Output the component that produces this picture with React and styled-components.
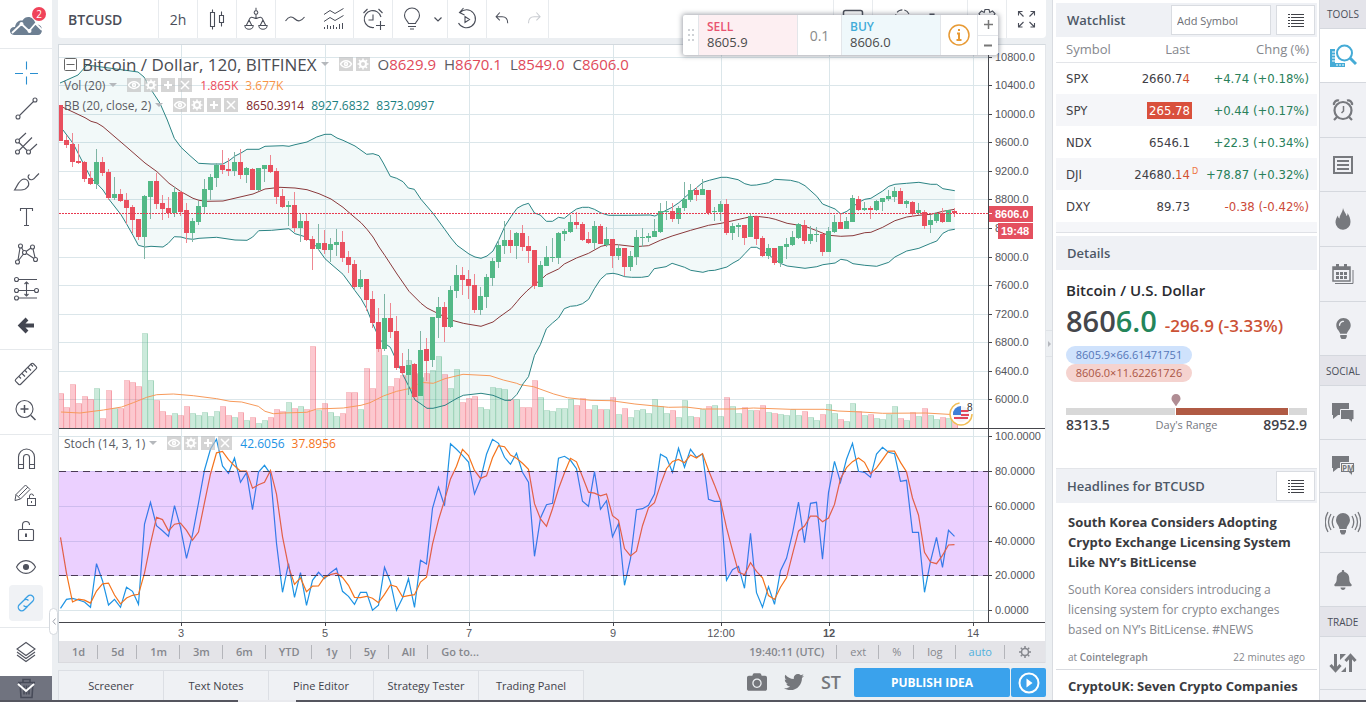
import React from "react";
import styled, { createGlobalStyle } from "styled-components";
import { FaLightbulb, FaBell, FaCamera, FaTwitter, FaMapMarker } from "react-icons/fa";

const UI = '"Open Sans", "Noto Sans", sans-serif';
const NUM = '"DejaVu Sans Condensed", "DejaVu Sans", sans-serif';
const AXIS = '"Liberation Sans", Arial, sans-serif';

const GlobalStyle = createGlobalStyle`
  *, *::before, *::after { box-sizing: border-box; }
  body { margin: 0; background: #eceff2; font-family: ${UI}; font-size: 12px; color: #4a4e59; }
  button, input { font: inherit; color: inherit; margin: 0; padding: 0; border: 0; background: none; }
  button { cursor: pointer; }
  h1, h2, h3, p { margin: 0; }
  svg { display: block; flex: none; }
`;

/* ---------- market data ---------- */

// Each bar: high, body top, body bottom, low, volume top; positive trend marked by 1.
// Values are measured downwards on a scale of three units per chart pixel.
const EARLY = [
  [45,45,153,153,910,0],[135,150,165,173,952,0],[129,162,216,231,883,0],[162,213,218,222,940,0],[212,216,266,276,919,0],
  [243,264,282,284,928,0],[177,216,281,296,895,1],[201,216,248,258,985,0],[237,246,324,330,901,0],[261,312,324,330,955,1],
  [297,312,332,335,955,0],[309,330,354,402,871,0],[345,351,389,429,877,0],[387,387,441,450,889,0],[314,318,440,507,730,1],
  [273,273,321,387,871,1],[249,273,342,357,931,0],[315,339,357,390,964,0],[321,354,369,384,976,0],[291,306,369,381,970,1],
  [303,306,366,378,976,0],[339,360,429,459,949,0],[384,393,429,456,970,1],[333,348,396,404,976,1],[267,297,351,372,967,1],
  [252,261,300,330,979,1],[218,224,263,290,964,1],[180,225,240,252,949,0],[204,237,243,258,976,0],[186,216,243,258,982,1],
  [177,216,255,266,967,0],[231,234,255,279,991,1],[234,237,300,300,982,0],[234,234,300,302,1000,1],[225,225,237,276,991,1],
  [195,225,245,249,982,0],[234,243,320,342,958,0],[297,318,351,354,964,0],[333,345,350,408,937,1],[306,345,414,426,955,0],
  [371,393,414,456,949,1],[372,393,450,453,958,0],[438,447,477,540,769,0],[402,459,477,480,961,1],[420,459,480,492,940,0],
  [444,462,480,516,967,1],[417,456,464,498,979,1],[423,456,503,516,970,0],[483,500,524,549,907,0],[510,522,591,597,907,0],
  [540,567,590,597,958,1],[567,567,630,663,835,0],[603,627,698,714,895,0],[654,696,777,786,775,0],[612,684,776,783,796,1],
  [639,684,726,744,889,0],[678,723,834,840,865,0],[789,828,849,855,856,0],[777,825,854,915,811,1],[819,822,920,924,850,0],
  [723,780,918,918,860,1],[744,777,813,874,850,0],[681,681,810,830,841,1],[621,651,684,744,799,1],[636,651,711,756,853,0],
  [588,600,711,714,895,1],[525,555,603,624,838,1],[531,555,570,615,937,0],[540,567,588,627,925,0],[552,585,660,669,919,0],
  [591,618,660,675,952,1],[552,561,620,654,958,1],[504,513,564,588,892,1],[450,465,516,534,895,1],[393,450,468,492,898,1],
  [420,450,468,489,928,0],[426,429,468,507,928,1],
];
const LATE = [
  [225,250,291,303,772,0],[258,288,303,338,772,0],[300,300,408,417,691,0],[333,345,411,411,742,1],[288,321,348,348,781,1],
  [264,320,324,336,784,1],[246,249,324,342,775,1],[237,243,251,273,775,1],[195,216,246,249,748,1],[186,216,224,237,766,0],
  [216,222,270,273,745,0],[246,267,279,281,778,0],[213,228,279,297,766,1],[222,228,282,282,778,0],[231,267,284,291,778,1],
  [267,267,318,354,742,0],[282,294,318,330,793,1],[294,294,351,378,775,0],[303,318,350,363,802,1],[240,261,321,345,781,1],
  [234,260,264,291,778,1],[249,258,264,276,790,1],[207,243,261,261,748,1],[159,183,246,249,769,1],[153,183,186,210,790,1],
  [159,183,207,216,781,0],[168,174,207,222,802,1],[96,147,174,183,751,1],[102,120,150,156,799,1],[111,120,135,153,802,0],
  [87,117,135,135,778,1],[120,120,189,195,769,0],[171,183,187,213,766,1],[153,162,186,213,799,1],[147,162,249,255,742,0],
  [219,228,249,270,769,1],[219,226,231,261,790,1],[225,225,264,285,772,0],[189,198,261,261,781,1],[198,198,267,285,781,0],
  [258,264,318,321,766,0],[282,294,318,327,787,1],[294,294,339,346,790,0],[288,288,339,350,793,1],[264,282,290,327,796,1],
  [243,261,285,288,778,1],[219,222,264,267,796,1],[210,225,273,282,784,0],[228,252,273,282,802,1],[231,252,255,276,811,1],
  [246,252,306,318,793,0],[231,243,305,305,763,1],[195,216,246,249,790,1],[189,216,237,237,808,0],[201,213,237,237,814,1],
  [135,144,216,216,760,1],[138,147,180,183,784,0],[156,174,180,183,796,1],[168,174,180,207,793,0],[150,153,180,183,805,1],
  [144,144,156,183,808,1],[120,138,147,153,793,1],[111,123,141,156,769,1],[114,123,162,162,805,0],[150,153,161,174,811,1],
  [153,156,192,201,787,0],[159,180,190,195,799,1],[180,186,228,237,775,0],[195,210,225,250,796,1],[186,189,213,219,808,1],
  [174,189,216,219,802,0],[180,180,216,216,805,1],[174,183,190,201,817,0],
];
const LATE_SHIFT = 180;
const toY = (v) => v / 3 + 45;
const barX = (i) => 1.5 + 6 * i;

const BARS = [
  ...EARLY,
  ...LATE.map((b) => b.map((v, k) => (k < 5 ? v + LATE_SHIFT : v))),
].map(([high, top, bottom, low, vol, up], i) => ({
  x: barX(i), high: toY(high), top: toY(top), bottom: toY(bottom), low: toY(low), vol: toY(vol), up: up === 1,
}));

const curve = (early, late) => [
  ...early.map(([x, y]) => [x / 3 - 9, toY(y)]),
  ...late.map(([x, y]) => [x / 2.958 + 461, toY(y + LATE_SHIFT)]),
];
const points = (list) => list.map(([x, y]) => `${x.toFixed(1)},${y.toFixed(1)}`).join(" ");

const UPPER = curve(
  [[30,-21],[57,-33],[84,-45],[111,-75],[177,-66],[264,-54],[282,-39],[304,0],[330,40],[352,90],[373,145],[393,172],[420,197],[446,220],[483,222],[519,222],[540,210],[555,198],[573,189],[591,178],[627,178],[645,169],[699,167],[717,169],[735,164],[771,156],[800,141],[825,133],[843,133],[861,144],[879,151],[915,168],[950,193],[969,191],[987,197],[1000,219],[1021,259],[1040,265],[1059,275],[1075,294],[1093,298],[1113,328],[1149,370],[1185,419],[1203,444],[1221,466],[1257,492],[1275,501],[1293,505],[1311,498],[1329,483],[1347,448],[1365,408],[1383,380],[1401,355],[1419,345]],
  [[12,164],[25,160],[43,189],[60,195],[78,214],[96,214],[114,202],[131,205],[149,190],[167,177],[185,172],[203,172],[220,178],[240,189],[262,196],[320,196],[385,195],[399,198],[415,190],[450,172],[470,158],[500,131],[522,113],[541,97],[560,91],[595,82],[612,82],[645,89],[665,101],[683,106],[700,105],[735,98],[753,88],[800,91],[824,97],[843,107],[878,139],[895,162],[932,177],[949,192],[967,184],[1002,157],[1020,148],[1038,145],[1073,123],[1091,109],[1109,103],[1144,100],[1180,97],[1215,103],[1233,103],[1251,116],[1286,122]]
);
const MIDDLE = curve(
  [[30,48],[69,66],[105,83],[123,94],[141,99],[159,110],[195,141],[231,172],[285,219],[321,245],[357,280],[393,305],[429,325],[447,331],[470,334],[519,333],[570,321],[609,312],[645,297],[690,292],[735,294],[771,299],[807,311],[843,327],[879,352],[915,383],[933,398],[951,418],[969,441],[987,471],[1005,497],[1041,552],[1077,604],[1113,640],[1131,654],[1149,663],[1185,681],[1203,690],[1240,700],[1257,703],[1293,709],[1329,696],[1347,682],[1383,656],[1401,635]],
  [[0,444],[20,423],[43,403],[60,391],[78,374],[114,357],[131,342],[167,324],[203,310],[240,289],[262,284],[290,284],[340,290],[380,287],[415,271],[450,258],[505,241],[558,226],[595,220],[630,212],[665,204],[683,200],[700,199],[735,203],[755,208],[790,220],[843,229],[878,242],[896,250],[914,256],[949,259],[985,257],[1020,248],[1038,247],[1073,232],[1109,212],[1144,201],[1180,196],[1215,193],[1251,184],[1286,178]]
);
const LOWER = curve(
  [[30,112],[39,120],[69,160],[105,230],[123,264],[141,281],[159,300],[177,328],[213,374],[231,404],[249,436],[265,466],[285,471],[303,469],[339,471],[355,460],[373,440],[393,441],[411,446],[429,448],[447,445],[500,442],[555,450],[591,451],[608,441],[626,422],[665,421],[717,416],[735,431],[771,442],[800,471],[825,506],[843,522],[879,553],[915,602],[933,626],[950,656],[968,701],[990,750],[1021,772],[1041,815],[1059,855],[1077,890],[1095,930],[1113,942],[1131,955],[1149,955],[1185,946],[1221,925],[1240,916],[1257,914],[1293,910],[1329,916],[1365,931],[1383,931],[1401,913]],
  [[10,700],[25,680],[43,616],[60,584],[78,536],[96,519],[114,504],[131,476],[149,469],[167,467],[185,461],[203,448],[220,416],[238,388],[256,372],[275,370],[290,373],[310,380],[330,382],[360,382],[380,379],[397,356],[432,350],[450,340],[487,352],[505,361],[541,367],[558,362],[576,361],[612,351],[630,339],[648,329],[665,311],[683,292],[700,292],[715,300],[740,318],[770,340],[790,348],[843,355],[878,350],[896,344],[932,339],[949,328],[967,331],[985,341],[1020,346],[1055,349],[1091,337],[1109,321],[1144,303],[1180,295],[1215,280],[1233,273],[1251,250],[1268,241],[1286,238]]
);
const VOLUME_AVERAGE = curve(
  [[33,966],[90,969],[160,960],[215,951],[250,938],[290,922],[320,914],[370,912],[430,917],[500,926],[540,934],[575,936],[625,949],[645,964],[670,971],[700,969],[770,967],[800,957],[880,954],[933,946],[960,938],[1000,918],[1040,904],[1090,893],[1110,877],[1150,880],[1185,866],[1239,853],[1320,857],[1360,870],[1400,880]],
  [[0,704],[40,710],[100,732],[140,743],[210,751],[270,752],[340,762],[440,772],[490,771],[540,777],[640,777],[690,774],[800,778],[900,778],[940,783],[1010,786],[1073,790],[1200,789],[1286,794]]
);

const STOCH_K = [535,508,505,510,516,532,401,452,525,508,532,472,484,523,282,217,287,302,319,227,292,385,314,219,120,57,28,108,130,84,157,128,239,126,106,132,340,487,401,502,428,526,451,427,446,428,415,484,499,523,487,487,541,526,412,457,541,504,446,532,391,402,235,172,227,41,58,76,96,192,148,73,28,40,82,103,70,127,157,379,264,224,220,85,79,91,116,214,229,125,238,212,320,281,466,386,239,236,226,192,73,83,127,55,112,58,82,72,208,214,214,451,419,409,475,310,488,532,470,523,422,385,310,216,338,220,217,388,188,94,157,88,40,124,127,142,72,52,67,71,154,151,307,307,487,394,322,412,301,319];
const STOCH_D = STOCH_K.map((v, i) => (i < 2 ? [322, 430][i] : (v + STOCH_K[i - 1] + STOCH_K[i - 2]) / 3));
const stochLine = (list) => points(list.map((v, i) => [barX(i), v / 3 + 1]));

const TIME_MARKS = [[122, "3"], [266, "5"], [410, "7"], [554, "9"], [662, "12:00"], [770, "12", true], [914, "14"]];
const PRICE_MARKS = Array.from({ length: 13 }, (_, i) => [Math.round(11.5 + 28.58 * i), `${10800 - 400 * i}.0`]);
const STOCH_MARKS = [[7, "100.0000"], [42, "80.0000"], [77, "60.0000"], [112, "40.0000"], [146, "20.0000"], [181, "0.0000"]];

/* ---------- page frame ---------- */

const Page = styled.div`
  height: 100vh; min-height: 600px; display: flex; flex-direction: column; overflow: hidden;
`;
const Workspace = styled.div`flex: 1; min-height: 0; display: flex;`;
const StatusStrip = styled.footer`height: 2px; background: #55565f; padding-left: 238px; flex: none;`;
const StatusMark = styled.div`width: 58px; height: 2px; background: #e9eaee;`;

/* ---------- drawing toolbar ---------- */

const DrawBar = styled.nav`
  position: relative; width: 52px; flex: none; background: #fff; display: flex; flex-direction: column;
`;
const Logo = styled.a`
  height: 49px; flex: none; display: flex; align-items: center; justify-content: center;
  position: relative; border-bottom: 1px solid #e6e9ec;
`;
const Badge = styled.span`
  position: absolute; top: 7px; right: 6px; width: 14px; height: 14px; border-radius: 50%;
  background: #f0435a; color: #fff; font-size: 10px; line-height: 14px; text-align: center;
`;
const DrawGroup = styled.div`
  padding: 6px 0; display: flex; flex-direction: column; align-items: center;
  & + & { border-top: 1px solid #e6e9ec; }
`;
const DrawButton = styled.button`
  width: 34px; height: 36px; border-radius: 4px; display: flex; align-items: center; justify-content: center; flex: none;
  color: ${(p) => (p.$active ? "#3aa0e4" : "#50535e")};
  background: ${(p) => (p.$active ? "#f0f2f5" : "transparent")};
`;
const ScrollDown = styled.button`
  position: absolute; left: 0; right: 0; bottom: 0; height: 24px; background: rgba(80, 84, 99, 0.82);
  display: flex; align-items: center; justify-content: center; color: #fff;
`;
const CollapseHandle = styled.button`
  position: absolute; right: -6px; top: 608px; width: 9px; height: 27px; border-radius: 5px;
  background: #fff; border: 1px solid #d5d9de; color: #9a9ea8; z-index: 2;
  display: flex; align-items: center; justify-content: center;
`;

const Line = ({ children, size = 28, w = 1.1, ...rest }) => (
  <svg width={size} height={size} viewBox="0 0 28 28" fill="none" stroke="currentColor" strokeWidth={w} aria-hidden="true" {...rest}>
    {children}
  </svg>
);

const DRAW_ICONS = {
  cross: <Line style={{ color: "#2a8fd0" }}><path d="M14.5 2.5v8M14.5 17.500v8M3 14.500h8M18 14.500h8" /></Line>,
  trend: <Line><circle cx="6" cy="22" r="2" /><circle cx="23" cy="5" r="2" /><path d="M7.500 20.500l14-14" /></Line>,
  fork: <Line><circle cx="5.500" cy="10" r="2" /><circle cx="5.500" cy="21" r="2" /><circle cx="16.500" cy="21" r="2" /><path d="M7 8.500L14 2M7 19.500L20 6.500M18 19.500L25 13M7 11.500L15 19.500" /></Line>,
  brush: <Line><path d="M2.500 23C6 18 7 12.500 12 12A4.800 4.800 0 0 1 15 20.500C13.500 22.500 11 23 9 23ZM17.500 7.500C14.500 9.500 17 13.500 20.500 12.500C22.500 12 23 10.500 24 9.500L27 6.500" /></Line>,
  text: <Line><path d="M8.500 8V5.500h12V8M14.500 5.500v17M12 22.500h5" /></Line>,
  pattern: <Line><circle cx="8.500" cy="7" r="2" /><circle cx="20.500" cy="8" r="2" /><circle cx="12.500" cy="13.500" r="2" /><circle cx="5.500" cy="23" r="2" /><circle cx="23.500" cy="20.500" r="2" /><path d="M8 9L6 21M9.500 8.500L11.500 12M14 12.500L19 9M21 10L23 18.500M14.500 14.500L22 19.500M11.500 15L6.500 21.500" /></Line>,
  range: <Line><circle cx="4.500" cy="4.500" r="2" /><circle cx="4.500" cy="15.500" r="2" /><circle cx="24.500" cy="15.500" r="2" /><circle cx="4.500" cy="23" r="2" /><path d="M6.500 4.500h18.500M6.500 15.500h16M6.500 23h18.500M14.500 7v14M12.500 9l2-2 2 2M12.500 19l2 2 2-2" /></Line>,
  back: <Line w={4} style={{ color: "#434651" }}><path d="M22 14.500H9M15 8l-6.500 6.500L15 21" /></Line>,
  ruler: <Line><rect x="1.500" y="10.500" width="25" height="7" rx="1.500" transform="rotate(-45 14 14)" /><path d="M7 16.500l2 2M10 13.500l3 3M13 10.500l2 2M16 7.500l3 3M19 4.500l2 2" /></Line>,
  zoom: <Line><circle cx="12.500" cy="13" r="8.500" /><path d="M8.500 13h8M12.500 9v8M19 19.500l4.500 4.500" strokeWidth="1.500" /></Line>,
  magnet: <Line><path d="M6.500 23.500V12a8 8 0 0 1 16 0v11.500h-5V12.500a3 3 0 0 0-6 0v11ZM6.500 19.500h5M17.500 19.500h5" /></Line>,
  lockdraw: <Line w={1}><path d="M3 19.500l1-6L13.500 4l4.500 4.500L8.500 18ZM6.500 15.500L16 6M4 13.500l4.500 4.500" /><rect x="15.500" y="17.500" width="8" height="7" /><path d="M17.500 17.500V15a2 2 0 0 1 4 0M19.500 20v2" /></Line>,
  unlock: <Line><rect x="6.500" y="12.500" width="15" height="11" rx="1" /><path d="M10.500 12.500V8a3.500 3.500 0 0 1 7 0" /><path d="M14 16.500v3.500" strokeWidth="2" /></Line>,
  eye: <Line><path d="M4.500 14C9 5.500 19 5.500 23.500 14C19 22.500 9 22.500 4.500 14Z" /><circle cx="14" cy="14" r="2.500" fill="currentColor" /></Line>,
  link: <Line w={1.3}><g transform="rotate(-45 14 14)"><path d="M13 17.500H8a3.500 3.500 0 0 1 0-7h6.500a3.500 3.500 0 0 1 3 3.500M15 10.500h5a3.500 3.500 0 0 1 0 7h-6.500a3.500 3.500 0 0 1-3-3.500" /></g></Line>,
  layers: <Line><path d="M14 4.500L23 11l-9 6.500L5 11ZM5 14l9 6.500L23 14M5 17l9 6.500L23 17" /></Line>,
  trash: <Line w={1.6} style={{ color: "#1f222c" }}><path d="M6 8.500h17M11 8V5.500h7V8M8 8.500l1 15h11l1-15M12 11.500v9M14.500 11.500v9M17 11.500v9" /></Line>,
};

const DRAW_GROUPS = [
  [["cross", "Crosshair"], ["trend", "Trend line"], ["fork", "Pitchfork"], ["brush", "Brush"], ["text", "Text"], ["pattern", "Pattern"], ["range", "Forecast"], ["back", "Arrow"]],
  [["ruler", "Measure"], ["zoom", "Zoom in"]],
  [["magnet", "Magnet"], ["lockdraw", "Stay in drawing mode"], ["unlock", "Lock drawings"], ["eye", "Hide drawings"], ["link", "Link", true]],
  [["layers", "Object tree"], ["trash", "Remove"]],
];

function DrawingToolbar() {
  return (
    <DrawBar>
      <Logo href="#" aria-label="Home">
        <svg width="34" height="24" viewBox="0 0 34 24">
          <path d="M5 23C-1 22 0 14.500 6 15C7 9 11 8 13.500 8.500C17 3 25 4 27 13C31 12 33 15 33 18C33 21 31 23 29 23Z" fill="#6d7f92" />
          <path d="M3 21L12.500 12L20 19L26.500 11.500L33 18" fill="none" stroke="#fff" strokeWidth="1.800" />
          <circle cx="12.500" cy="12" r="2" fill="#fff" /><circle cx="20.500" cy="19" r="2" fill="#fff" />
        </svg>
        <Badge>2</Badge>
      </Logo>
      {DRAW_GROUPS.map((group, g) => (
        <DrawGroup key={g}>
          {group.map(([icon, label, active]) => (
            <DrawButton key={icon} aria-label={label} $active={active}>{DRAW_ICONS[icon]}</DrawButton>
          ))}
        </DrawGroup>
      ))}
      <ScrollDown aria-label="Scroll down">
        <svg width="18" height="10" viewBox="0 0 18 10" fill="none" stroke="currentColor" strokeWidth="2"><path d="M1 1l8 7 8-7" /></svg>
      </ScrollDown>
      <CollapseHandle aria-label="Hide toolbar">
        <svg width="4" height="7" viewBox="0 0 4 7" fill="none" stroke="currentColor"><path d="M3.500 .5L1 3.500l2.500 3" /></svg>
      </CollapseHandle>
    </DrawBar>
  );
}

/* ---------- centre column ---------- */

const Centre = styled.main`
  position: relative; flex: 1; min-width: 0; display: flex; flex-direction: column; padding: 0 6px;
`;
const TopBar = styled.header`
  height: 38px; flex: none; background: #fff; border-radius: 0 0 4px 4px; display: flex; overflow: hidden;
`;
const TopCell = styled.button`
  width: ${(p) => p.$w}px; flex: none; display: flex; align-items: center; justify-content: center; gap: 8px;
  border-right: 1px solid ${(p) => (p.$open ? "transparent" : "#e8ebee")}; color: #4a4e59; font-size: 14px;
`;
const SymbolCell = styled(TopCell)`font-weight: 600; justify-content: flex-start; padding-left: 10px;`;
const Spacer = styled.div`flex: 1; ${(p) => p.$edge && "border-right: 1px solid #e8ebee;"}`;

const TicketBox = styled.section`
  position: absolute; top: 15px; right: 54px; z-index: 3; height: 40px; display: flex; background: #fff;
  border-radius: 2px; box-shadow: 0 0 5px 1px rgba(70, 76, 90, 0.5);
`;
const TicketDrag = styled.div`width: 15px; display: flex; align-items: center; justify-content: center;`;
const TicketSide = styled.button`
  width: 100px; padding: 4px 0 0 8px; text-align: left; display: flex; flex-direction: column; color: #4a4a4a;
  font-size: 13px; line-height: 16px; background: ${(p) => (p.$buy ? "#eff8fb" : "#fdeff2")};
  border: 0 solid #e3e6ea; border-width: 0 1px;
`;
const TicketLabel = styled.span`
  font-size: 12px; line-height: 15px; font-weight: 600; color: ${(p) => (p.$buy ? "#41abd8" : "#e85370")};
`;
const TicketQty = styled.div`
  width: 43px; display: flex; align-items: center; justify-content: center; color: #8a8a8a; font-size: 14px;
`;
const TicketInfo = styled.button`width: 36px; display: flex; align-items: center; justify-content: center;`;
const TicketSteps = styled.div`width: 21px; display: flex; flex-direction: column; border-left: 1px solid #e3e6ea;`;
const StepButton = styled.button`
  flex: 1; display: flex; align-items: center; justify-content: center; color: #777;
  & + & { border-top: 1px solid #e3e6ea; }
`;

function OrderTicket() {
  return (
    <TicketBox>
      <TicketDrag>
        <svg width="6" height="12" viewBox="0 0 6 12" fill="#cfd2d6">
          {[0, 5, 10].map((y) => <g key={y}><rect y={y} width="2" height="2" /><rect x="4" y={y} width="2" height="2" /></g>)}
        </svg>
      </TicketDrag>
      <TicketSide><TicketLabel>SELL</TicketLabel>8605.9</TicketSide>
      <TicketQty>0.1</TicketQty>
      <TicketSide $buy><TicketLabel $buy>BUY</TicketLabel>8606.0</TicketSide>
      <TicketInfo aria-label="Order info">
        <svg width="24" height="24" viewBox="0 0 24 24" fill="none" stroke="#e79a35" strokeWidth="1.500">
          <circle cx="12" cy="12" r="10" /><path d="M10 10.500h2V17M9.500 17h5M12 6v2" strokeWidth="2" />
        </svg>
      </TicketInfo>
      <TicketSteps>
        <StepButton aria-label="Increase"><svg width="9" height="9" stroke="currentColor" strokeWidth="1.500"><path d="M0 4.500h9M4.500 0v9" /></svg></StepButton>
        <StepButton aria-label="Decrease"><svg width="9" height="9" stroke="currentColor" strokeWidth="2"><path d="M0 4.500h8" /></svg></StepButton>
      </TicketSteps>
    </TicketBox>
  );
}

function TopToolbar() {
  return (
    <TopBar>
      <SymbolCell $w={101}>BTCUSD</SymbolCell>
      <TopCell $w={39}>2h</TopCell>
      <TopCell $w={39} aria-label="Chart type"><Line><path d="M7.500 7.500h4v14h-4ZM9.500 4.500v3M9.500 21.500v3M16.500 10.500h4v7h-4ZM18.500 6.500v4M18.500 17.500v4" /></Line></TopCell>
      <TopCell $w={39} aria-label="Compare"><Line size={26}><circle cx="14" cy="7" r="2" /><path d="M14 5V2M14 9v4.500M6.500 15C8 10 11.500 13 14 13.500C16.500 13 20 10 21.500 15M3.500 21L6.500 15L9.500 21M18.500 21L21.500 15L24.500 21M2 21h9a4.500 4 0 0 1-9 0ZM17 21h9a4.500 4 0 0 1-9 0Z" /></Line></TopCell>
      <TopCell $w={39} aria-label="Line style" $open><Line><path d="M4.500 16C8 11 11 11 14 14S20 16.500 23.500 12" /></Line></TopCell>
      <TopCell $w={39} aria-label="Indicators"><Line w={1}><path d="M4 9.500l6-4 5 3 8.500-5M4 16.500l6-4 5 3 8.500-5M4.500 24v-2M7.500 24v-4M10.500 24v-3M13.500 24v-4M16.500 24v-2M19.500 24v-5M22.500 24v-6" /></Line></TopCell>
      <TopCell $w={39} aria-label="Alert"><Line><path d="M22 12A8.500 8.500 0 1 0 15 22.500M14 9.500V15H9.500M17 20.500h9M21.500 16v9M4.500 8l4-4M19.500 4l4 4" /></Line></TopCell>
      <TopCell $w={55} aria-label="Ideas">
        <Line><path d="M10.500 18.500C10 15.500 6.500 15 6.500 10.500a7.500 7.500 0 0 1 15 0C21.500 15 18 15.500 17.500 18.500ZM10 21.500h8M12 24h4" /></Line>
        <svg width="8" height="5" fill="none" stroke="currentColor" strokeWidth="1.200"><path d="M.5.5L4 4 7.500.5" /></svg>
      </TopCell>
      <TopCell $w={39} aria-label="Replay"><Line><path d="M7 7.500A9 9 0 1 1 5.500 18M12 11.500v6l4.500-3ZM10.500 3L6.500 7.500l5 2.500" /></Line></TopCell>
      <TopCell $w={34} aria-label="Undo" $open><Line size={26}><path d="M9.500 7l-4 4.500 4 4M6 11.500h6c4 0 6 2.500 6 7" /></Line></TopCell>
      <TopCell $w={28} aria-label="Redo"><Line size={26} style={{ color: "#c9ccd1" }}><path d="M15.500 7l4 4.500-4 4M19 11.500h-6c-4 0-6 2.500-6 7" /></Line></TopCell>
      <Spacer $edge />
      <TopCell $w={39} aria-label="Layout"><Line w={1.5}><rect x="4.500" y="5.500" width="19" height="15" rx="2" /></Line></TopCell>
      <TopCell $w={95} aria-label="Save"><Line><path d="M8 15a6 6 0 0 1 13-6" strokeDasharray="6 2" /></Line><Line><path d="M6 9h4v3H6Z" fill="currentColor" /></Line></TopCell>
      <TopCell $w={39} aria-label="Settings"><Line><circle cx="14" cy="14" r="3" /><path d="M12 4.500h4l.8 3 2.700-1.500L22 8.500l-1.500 2.700 3 .8v4l-3 .8L22 19.500 19.500 22l-2.700-1.500-.8 3h-4l-.8-3L8.500 22 6 19.500l1.500-2.700-3-.8v-4l3-.8L6 8.500 8.500 6l2.700 1.500Z" /></Line></TopCell>
      <TopCell $w={39} aria-label="Full screen" $open><Line><path d="M6.500 10.500V6.500h4M6.500 6.500l5 5M18.500 6.500h4v4M22.500 6.500l-5 5M6.500 18v4h4M6.500 22l5-5M18.500 22h4v-4M22.500 22l-5-5" /></Line></TopCell>
    </TopBar>
  );
}

const ChartCard = styled.section`
  margin-top: 6px; border: 1px solid #d3d9de; border-right-color: #e3e6ea; border-bottom: 0; background: #fff; display: flex; flex-direction: column; flex: none;
`;
const Pane = styled.div`
  position: relative; display: flex; height: ${(p) => p.$h}px; border-bottom: 1px solid #45464c; overflow: hidden;
`;
const Plot = styled.svg`flex: 1; min-width: 0; height: 100%;`;
const Scale = styled.svg`
  width: 57px; height: 100%; border-left: 1px solid #45464c; font-family: ${AXIS}; font-size: 11px; fill: #55565c; overflow: hidden;
`;
const TimeScale = styled.svg`width: 100%; height: 18px; font-family: ${AXIS}; font-size: 11px; fill: #55565c;`;

const Legend = styled.div`position: absolute; left: 5px; top: ${(p) => p.$top}px; display: flex; flex-direction: column; align-items: flex-start;`;
const LegendRow = styled.div`display: flex; align-items: center; height: 20px; font-size: 12px; color: #5a5c63; white-space: nowrap;`;
const LegendTitle = styled(LegendRow)`height: 22px; font-size: 15px;`;
const LegendName = styled.h1`font-size: 17px; font-weight: 400; margin-left: 5px; color: #4a4c52;`;
const Caret = styled.span`border: 4px solid transparent; border-top-color: #b5b8bc; border-bottom: 0; margin: 0 10px 0 4px;`;
const MiniButtons = styled.span`display: flex; gap: 3px; margin-right: 8px;`;
const MiniButton = styled.button`width: 14px; height: 14px; background: rgba(190, 190, 190, 0.65); color: #fff; display: flex;`;
const Value = styled.span`color: ${(p) => p.$c}; margin-right: 7px;`;
const Ohlc = styled.span`margin-right: 8px; & > span { color: #e04a5a; }`;

const MINI = {
  eye: <><path d="M1.500 7C4 2.500 10 2.500 12.500 7C10 11.500 4 11.500 1.500 7Z" /><circle cx="7" cy="7" r="1.500" /></>,
  gear: <><circle cx="7" cy="7" r="3" strokeWidth="2" /><path d="M7 1.500v11M1.500 7h11M3 3l8 8M11 3l-8 8" strokeDasharray="2 7.500" /></>,
  plus: <path d="M7 3v8M3 7h8" strokeWidth="2" />,
  close: <path d="M3 3l8 8M11 3l-8 8" />,
};
const Minis = ({ names = ["eye", "gear", "plus", "close"] }) => (
  <MiniButtons>
    {names.map((n) => (
      <MiniButton key={n} aria-label={n}>
        <svg width="14" height="14" viewBox="0 0 14 14" fill="none" stroke="currentColor" strokeWidth="1.500">{MINI[n]}</svg>
      </MiniButton>
    ))}
  </MiniButtons>
);

const Grid = ({ rows }) => (
  <g stroke="#dbe6ea" shapeRendering="crispEdges">
    {rows.map(([y]) => <line key={y} x1="0" x2="100%" y1={y + 0.5} y2={y + 0.5} />)}
    {TIME_MARKS.map(([x]) => <line key={x} x1={x + 0.5} x2={x + 0.5} y1="0" y2="100%" />)}
  </g>
);
const ScaleMarks = ({ rows }) => rows.map(([y, text]) => (
  <g key={text}><path d={`M0 ${y + 0.5}h3`} stroke="#45464c" /><text x="6" y={y + 4}>{text}</text></g>
));

function PricePane() {
  return (
    <Pane $h={384}>
      <Plot>
        <Grid rows={PRICE_MARKS} />
        <polygon points={points([...UPPER, ...LOWER.slice().reverse()])} fill="rgba(0,128,128,0.05)" />
        <g shapeRendering="crispEdges">
          {BARS.map((b) => (
            <rect key={b.x} x={b.x - 2} y={Math.round(b.vol) + 0.5} width="5" height={384 - Math.round(b.vol)}
              fill={b.up ? "rgba(83,185,135,0.3)" : "rgba(245,85,105,0.32)"} stroke={b.up ? "rgba(83,175,130,0.35)" : "rgba(235,85,100,0.35)"} />
          ))}
        </g>
        <g fill="none" strokeWidth="1">
          <polyline points={points(VOLUME_AVERAGE)} stroke="#f79a5b" />
          <polyline points={points(MIDDLE)} stroke="#8a3a3c" />
          <polyline points={points(UPPER)} stroke="#2b8484" />
          <polyline points={points(LOWER)} stroke="#2b8484" />
        </g>
        <g shapeRendering="crispEdges">
          {BARS.map((b) => (
            <g key={b.x}>
              <line x1={b.x} x2={b.x} y1={b.high} y2={b.low} stroke={b.up ? "#7fb5a5" : "#ee8791"} />
              <rect x={b.x - 2.5} y={Math.round(b.top)} width="5" height={Math.max(1, Math.round(b.bottom) - Math.round(b.top))} fill={b.up ? "#53b987" : "#e94f5e"} />
            </g>
          ))}
        </g>
        <line x1="0" x2="100%" y1="168.5" y2="168.5" stroke="#e8384f" strokeWidth="1" strokeDasharray="2 1" />
        <g transform="translate(902 369)">
          <circle r="11" fill="#fff" />
          <circle r="11" fill="none" stroke="#f2bd55" strokeWidth="1.500" strokeDasharray="50 19.100" transform="rotate(0)" />
          <circle r="8" fill="#f4f4f8" />
          <path d="M0-3h7.500M0 1h8M-7 4h14" stroke="#e2465a" strokeWidth="2" />
          <path d="M0-8V1H-8A8 8 0 0 1 0-8Z" fill="#3f7fd8" />
        </g>
        <text x="908" y="366" fontFamily={AXIS} fontSize="10" fill="#333">8</text>
      </Plot>
      <Scale>
        <ScaleMarks rows={PRICE_MARKS} />
        <rect x="0" y="161" width="44" height="16" fill="#e4505f" />
        <path d="M0 168.500h3" stroke="#fff" />
        <text x="6" y="173" fill="#fff" fontWeight="700">8606.0</text>
        <rect x="9" y="178" width="35" height="16" fill="#e4505f" />
        <text x="12" y="190" fill="#fff" fontWeight="700">19:48</text>
      </Scale>
      <Legend $top={8}>
        <LegendTitle>
          <svg width="13" height="13" fill="none" stroke="#666"><rect x=".5" y=".5" width="12" height="12" rx="1" /><path d="M2.500 6.500h8" /></svg>
          <LegendName>Bitcoin / Dollar, 120, BITFINEX</LegendName><Caret />
          <Minis names={["eye", "gear"]} />
          <Ohlc>O<span>8629.9</span></Ohlc><Ohlc>H<span>8670.1</span></Ohlc><Ohlc>L<span>8549.0</span></Ohlc><Ohlc>C<span>8606.0</span></Ohlc>
        </LegendTitle>
        <LegendRow>Vol (20)<Caret /><Minis /><Value $c="#eb4d5c">1.865K</Value><Value $c="#f79447">3.677K</Value></LegendRow>
        <LegendRow>BB (20, close, 2)<Caret /><Minis /><Value $c="#80262b">8650.3914</Value><Value $c="#1b8080">8927.6832</Value><Value $c="#1b8080">8373.0997</Value></LegendRow>
      </Legend>
    </Pane>
  );
}

function StochPane() {
  return (
    <Pane $h={194}>
      <Plot>
        <Grid rows={STOCH_MARKS} />
        <g fill="none" strokeWidth="1.200">
          <polyline points={stochLine(STOCH_K)} stroke="#1e93e4" />
          <polyline points={stochLine(STOCH_D)} stroke="#f4731c" />
        </g>
        <rect x="0" y="42" width="100%" height="105" fill="rgba(153,21,255,0.2)" />
        <g stroke="#4a3a55" strokeDasharray="7 5" shapeRendering="crispEdges">
          <line x1="0" x2="100%" y1="42.5" y2="42.5" /><line x1="0" x2="100%" y1="146.5" y2="146.5" />
        </g>
      </Plot>
      <Scale><ScaleMarks rows={STOCH_MARKS} /></Scale>
      <Legend $top={4}>
        <LegendRow>Stoch (14, 3, 1)<Caret /><Minis /><Value $c="#1e93e4">42.6056</Value><Value $c="#f4731c">37.8956</Value></LegendRow>
      </Legend>
    </Pane>
  );
}

const RangeBar = styled.div`
  height: 22px; background: #e4e4e8; display: flex; align-items: center; color: #85878d; font-size: 11px; border-bottom: 1px solid #dadade;
`;
const RangeButton = styled.button`
  padding: 0 12px 0 13px; height: 14px; line-height: 14px; white-space: nowrap;
  border-right: 1px solid ${(p) => (p.$last ? "transparent" : "#b4b5ba")};
  font-weight: ${(p) => (p.$strong ? 600 : 400)};
  color: ${(p) => (p.$on ? "#4fb0dd" : "inherit")};
`;

function ChartArea() {
  return (
    <ChartCard>
      <PricePane />
      <StochPane />
      <TimeScale>
        {TIME_MARKS.map(([x, text, bold]) => (
          <g key={text}>
            <path d={`M${x + 0.5} 0v3`} stroke="#45464c" />
            <text x={x} y="14" textAnchor="middle" fontWeight={bold ? 700 : 400}>{text}</text>
          </g>
        ))}
      </TimeScale>
      <RangeBar>
        {["1d", "5d", "1m", "3m", "6m", "YTD", "1y", "5y", "All", "Go to..."].map((t) => (
          <RangeButton key={t} $strong $last={t === "Go to..."}>{t}</RangeButton>
        ))}
        <Spacer />
        <RangeButton $strong>19:40:11 (UTC)</RangeButton>
        <RangeButton>ext</RangeButton>
        <RangeButton>%</RangeButton>
        <RangeButton>log</RangeButton>
        <RangeButton $on>auto</RangeButton>
        <RangeButton $last aria-label="Scale settings">
          <svg width="14" height="14" viewBox="0 0 14 14" fill="none" stroke="currentColor" strokeWidth="1.500">
            <circle cx="7" cy="7" r="3.500" /><path d="M7 1v2M7 11v2M1 7h2M11 7h2M2.800 2.800l1.400 1.400M9.800 9.800l1.400 1.400M11.200 2.800L9.800 4.200M4.200 9.800l-1.400 1.400" />
          </svg>
        </RangeButton>
      </RangeBar>
    </ChartCard>
  );
}

const BottomBar = styled.div`flex: 1; display: flex; align-items: stretch; padding-top: 5px;`;
const BottomTab = styled.button`
  width: 105px; margin-top: 2px; background: #eff1f4; border: 1px solid #dcdfe4; border-width: 1px 1px 0 0; font-size: 11px; color: #3f424a;
  &:first-child { border-left-width: 1px; width: 106px; }
`;
const ShareGroup = styled.div`display: flex; align-items: center; gap: 17px; margin-right: 13px; padding-bottom: 4px; color: #75777c;`;
const ShareButton = styled.button`display: flex; font-size: 18px; font-weight: 600; line-height: 24px;`;
const PublishButton = styled.button`
  width: ${(p) => (p.$round ? 35 : 156)}px; height: 29px; background: #3aa2ec; color: #fff; font-weight: 700; font-size: 12px;
  display: flex; align-items: center; justify-content: center; border-radius: 2px; margin-left: ${(p) => (p.$round ? 1 : 0)}px;
`;

function FooterTools() {
  return (
    <BottomBar>
      {["Screener", "Text Notes", "Pine Editor", "Strategy Tester", "Trading Panel"].map((t) => <BottomTab key={t}>{t}</BottomTab>)}
      <Spacer />
      <ShareGroup>
        <ShareButton aria-label="Snapshot"><FaCamera size={20} /></ShareButton>
        <ShareButton aria-label="Twitter"><FaTwitter size={20} /></ShareButton>
        <ShareButton>ST</ShareButton>
      </ShareGroup>
      <PublishButton>PUBLISH IDEA</PublishButton>
      <PublishButton $round aria-label="Start streaming">
        <svg width="22" height="22" viewBox="0 0 22 22" fill="none" stroke="#fff" strokeWidth="2"><circle cx="11" cy="11" r="9.500" /><path d="M8.500 6.500v9l6-4.500Z" fill="#fff" stroke="none" /></svg>
      </PublishButton>
    </BottomBar>
  );
}

/* ---------- side panel ---------- */

const PanelHandle = styled.button`
  position: absolute; right: 0; top: 330px; width: 6px; height: 27px; border: 1px solid #dfe3e7; border-width: 1px 0;
  display: flex; align-items: center; justify-content: center; color: #b5b8be;
`;
const SidePanel = styled.aside`
  width: 268px; flex: none; background: #fff; border: 1px solid #d9dce1; border-width: 0 1px; padding: 3px 2px 0 3px; overflow: hidden;
  display: flex; flex-direction: column; position: relative; z-index: 1;
`;
const PanelHead = styled.div`
  height: 34px; flex: none; background: #eff1f5; display: flex; align-items: center; padding: 0 2px 0 11px; gap: 5px;
`;
const PanelTitle = styled.h2`flex: 1; font-size: 13px; font-weight: 600; color: #4d5866;`;
const SymbolInput = styled.input`
  width: 100px; height: 30px; border: 1px solid #d9dce1; background: #fff; padding-left: 5px; font-size: 11px;
  &::placeholder { color: #6d6f75; opacity: 1; }
`;
const MenuButton = styled.button`
  width: 39px; height: 30px; border: 1px solid #d9dce1; background: #fff; display: flex; align-items: center; justify-content: center;
`;
const ListIcon = () => (
  <svg width="16" height="13" viewBox="0 0 16 13" stroke="#3f4147" strokeWidth="1" shapeRendering="crispEdges">
    {[0, 3, 6, 9, 12].map((y) => <path key={y} d={`M0 ${y + 0.5}h2M3 ${y + 0.5}H16`} />)}
  </svg>
);
const Quotes = styled.table`
  width: 100%; table-layout: fixed; border-collapse: collapse; font-family: ${NUM}; font-size: 13px; color: #3f4046;
  th { height: 25px; font-family: ${UI}; font-weight: 400; font-size: 13px; color: #85878d; text-align: right; border-bottom: 1px solid #e3e5e9; }
  td { height: 32px; text-align: right; padding: 0; white-space: nowrap; }
  th { padding: 0; }
  th:first-child, td:first-child { text-align: left; padding-left: 10px; width: 60px; }
  th:nth-child(2), td:nth-child(2) { width: 75px; padding-right: 1px; }
  th:last-child, td:last-child { padding-right: 8px; }
  tbody tr:nth-child(even) { background: #f5f6f9; }
`;
const Change = styled.td`color: ${(p) => (p.$down ? "#cc4a38" : "#29805a")};`;
const Hot = styled.span`color: #d2502f;`;
const Flash = styled.span`background: #d9503c; color: #fff; padding: 1px 2px; margin-right: -2px;`;
const Delayed = styled.sup`position: absolute; margin-left: 2px; font-size: 9px; color: #ee7240; line-height: 9px;`;
const QuoteTail = styled.div`height: 11px; flex: none; background: #f5f6f9; border-bottom: 1px solid #dfe1e6; margin-bottom: 3px;`;

const DetailsBody = styled.div`height: 199px; flex: none; padding: 10px 10px 0; border-bottom: 1px solid #e3e5e9;`;
const DetailName = styled.h3`font-size: 15px; line-height: 20px; font-weight: 600; color: #2a2b30;`;
const PriceRow = styled.div`display: flex; align-items: baseline; gap: 8px; height: 46px; line-height: 42px; white-space: nowrap;`;
const BigPrice = styled.span`font-size: 29px; font-weight: 600; color: #45464b; & > span { color: #24855a; }`;
const Delta = styled.span`font-size: 17px; font-weight: 600; color: #cc5236;`;
const Pill = styled.div`
  width: 126px; height: 18px; border-radius: 9px; line-height: 18px; font-size: 11px; text-align: center;
  background: ${(p) => (p.$ask ? "#f5d3cf" : "#cfe2fc")}; color: ${(p) => (p.$ask ? "#aa5545" : "#5576b8")};
`;
const RangePin = styled.div`display: flex; justify-content: center; margin: 12px 22px 2px 0; color: #b08d94;`;
const RangeTrack = styled.div`height: 7px; display: flex; gap: 1px;`;
const TrackPart = styled.div`flex: ${(p) => p.$part}; background: ${(p) => (p.$on ? "#b05a44" : "#d8d8d8")};`;
const RangeLabels = styled.div`
  display: flex; justify-content: space-between; align-items: center; line-height: 20px; font-size: 14px; font-weight: 600; color: #3f4046;
  & > span { font-size: 11px; font-weight: 400; color: #77797f; }
`;

const Stories = styled.div`padding-top: 3px; flex: none;`;
const Story = styled.article`padding: 6px 12px 0; color: #85878d; border-bottom: 1px solid #d9dbe0; height: 164px;`;
const StoryTitle = styled.h3`font-size: 13px; line-height: 20px; font-weight: 700; color: #3a3b40; white-space: nowrap;`;
const StoryText = styled.p`font-size: 12px; line-height: 20px; margin: 8px 0; white-space: nowrap;`;
const StoryMeta = styled.div`display: flex; justify-content: space-between; font-size: 10px; line-height: 18px;`;
const Source = styled.a`color: inherit; text-decoration: none; font-weight: 600;`;

const QUOTES = [
  { s: "SPX", last: <>2660.7<Hot>4</Hot></>, change: "+4.74 (+0.18%)" },
  { s: "SPY", last: <Flash>265.78</Flash>, change: "+0.44 (+0.17%)" },
  { s: "NDX", last: "6546.1", change: "+22.3 (+0.34%)" },
  { s: "DJI", last: <>24680.<Hot>14</Hot><Delayed>D</Delayed></>, change: "+78.87 (+0.32%)" },
  { s: "DXY", last: "89.73", change: "-0.38 (-0.42%)", down: true },
];

function InfoPanel() {
  return (
    <SidePanel>
      <PanelHead>
        <PanelTitle>Watchlist</PanelTitle>
        <SymbolInput aria-label="Add Symbol" placeholder="Add Symbol" />
        <MenuButton aria-label="Watchlist menu"><ListIcon /></MenuButton>
      </PanelHead>
      <Quotes>
        <thead><tr><th>Symbol</th><th>Last</th><th>Chng (%)</th></tr></thead>
        <tbody>
          {QUOTES.map((q) => <tr key={q.s}><td>{q.s}</td><td>{q.last}</td><Change $down={q.down}>{q.change}</Change></tr>)}
        </tbody>
      </Quotes>
      <QuoteTail />
      <PanelHead><PanelTitle>Details</PanelTitle></PanelHead>
      <DetailsBody>
        <DetailName>Bitcoin / U.S. Dollar</DetailName>
        <PriceRow><BigPrice>860<span>6.0</span></BigPrice><Delta>-296.9 (-3.33%)</Delta></PriceRow>
        <Pill>8605.9×66.61471751</Pill>
        <Pill $ask>8606.0×11.62261726</Pill>
        <RangePin><FaMapMarker size={12} /></RangePin>
        <RangeTrack><TrackPart $part={109} /><TrackPart $part={112} $on /><TrackPart $part={18} /></RangeTrack>
        <RangeLabels>8313.5<span>Day's Range</span>8952.9</RangeLabels>
      </DetailsBody>
      <PanelHead>
        <PanelTitle>Headlines for BTCUSD</PanelTitle>
        <MenuButton aria-label="Headlines menu"><ListIcon /></MenuButton>
      </PanelHead>
      <Stories>
        <Story>
          <StoryTitle>South Korea Considers Adopting<br />Crypto Exchange Licensing System<br />Like NY’s BitLicense</StoryTitle>
          <StoryText>South Korea considers introducing a<br />licensing system for crypto exchanges<br />based on NY’s BitLicense. #NEWS</StoryText>
          <StoryMeta><span>at <Source href="#">Cointelegraph</Source></span><span>22 minutes ago</span></StoryMeta>
        </Story>
        <Story>
          <StoryTitle>CryptoUK: Seven Crypto Companies</StoryTitle>
        </Story>
      </Stories>
    </SidePanel>
  );
}

/* ---------- tool strip ---------- */

const ToolStrip = styled.nav`width: 46px; flex: none; background: #f0f1f5; display: flex; flex-direction: column; color: #77797e;`;
const StripHead = styled.div`
  height: ${(p) => p.$h}px; flex: none; background: #e4e4ea; border-bottom: 1px solid #d5d8de; display: flex; align-items: center; justify-content: center;
  font-size: 10px; color: #4a4e59;
`;
const StripButton = styled.button`
  height: ${(p) => p.$h}px; flex: none; border-bottom: 1px solid #d5d8de; display: flex; align-items: center; justify-content: center;
  background: ${(p) => (p.$on ? "#fff" : "transparent")}; color: ${(p) => (p.$on ? "#45abd6" : "inherit")};
`;
const PrivateMark = styled.text`font-family: ${UI}; font-size: 8px; font-weight: 700;`;

const Chat = ({ pm }) => (
  <svg width="24" height="24" viewBox="0 0 24 24" fill="currentColor">
    <path d="M1 2h17v12H7l-5 4v-4H1Z" />
    <path d="M9.500 8.500h13.500v10h-1.500v3.500l-3.500-3.500H9.500Z" stroke="#f0f1f5" />
    {pm && <><rect x="10.500" y="9.500" width="12" height="8" fill="#f0f1f5" stroke="currentColor" /><PrivateMark x="11" y="16.500">PM</PrivateMark></>}
  </svg>
);

function RightStrip() {
  return (
    <ToolStrip>
      <StripHead $h={29}>TOOLS</StripHead>
      <StripButton $h={54} $on aria-label="Watchlist">
        <svg width="28" height="24" viewBox="0 0 28 24" fill="none" stroke="currentColor">
          <path d="M1 5h5v14h10v4H1Z" fill="currentColor" stroke="none" /><path d="M3 8h3M3 11h3M3 14h3M3 17h3M8 20v2M11 20v2M14 20v2" stroke="#fff" />
          <circle cx="15.500" cy="9" r="7.500" strokeWidth="2" fill="#fff" /><path d="M21 14l6 6" strokeWidth="3" />
        </svg>
      </StripButton>
      <StripButton $h={55} aria-label="Alerts">
        <svg width="22" height="24" viewBox="0 0 22 24" fill="none" stroke="currentColor" strokeWidth="2.200">
          <circle cx="11" cy="12.500" r="8.500" /><path d="M11.500 8v5l-2 2" strokeWidth="1.500" /><path d="M2 7a4 4 0 0 1 5-4.500M20 7a4 4 0 0 0-5-4.500M5 19l-3 3M17 19l3 3" />
        </svg>
      </StripButton>
      <StripButton $h={54} aria-label="Data window">
        <svg width="20" height="18" viewBox="0 0 20 18" fill="none" stroke="currentColor" strokeWidth="2"><rect x="1" y="1" width="18" height="16" /><path d="M4 5h12M4 9h12M4 13h12" /></svg>
      </StripButton>
      <StripButton $h={55} aria-label="Hotlists">
        <svg width="16" height="22" viewBox="0 0 16 22" fill="currentColor"><path d="M8 0c1 4 3 5 3.500 8 1-.5 1-2 1-3 2 3 3 6 3 9a7.500 7.500 0 0 1-15 .5c0-3 1-5 2.500-7 0 1.500.5 2.500 1.500 3C4.500 7 7.500 5 8 0Z" /></svg>
      </StripButton>
      <StripButton $h={55} aria-label="Calendar">
        <svg width="22" height="22" viewBox="0 0 22 22" fill="none" stroke="currentColor">
          <rect x="1" y="4" width="17" height="14" strokeWidth="1.500" /><path d="M1 5.500h17" strokeWidth="3" /><path d="M5.500 1v4M13.500 1v4" strokeWidth="3" />
          <path d="M3 20.500h18V7" /><path d="M4 10.500h3M8 10.500h3M12 10.500h3M4 14.500h3M8 14.500h3M12 14.500h3" strokeWidth="3" />
        </svg>
      </StripButton>
      <StripButton $h={54} aria-label="My ideas"><FaLightbulb size={21} /></StripButton>
      <StripHead $h={30}>SOCIAL</StripHead>
      <StripButton $h={54} aria-label="Public chats"><Chat /></StripButton>
      <StripButton $h={53} aria-label="Private chats"><Chat pm /></StripButton>
      <StripButton $h={60} aria-label="Ideas stream">
        <svg width="36" height="28" viewBox="0 0 36 28" fill="none" stroke="currentColor" strokeWidth="1.300">
          <path d="M9 7q-3.500 6 0 12M6 5q-5 8 0 16M3 3q-5.500 10 0 20M27 7q3.500 6 0 12M30 5q5 8 0 16M33 3q5.500 10 0 20" />
          <path d="M14.500 20C14 16 11 15 11 11a7 7 0 0 1 14 0c0 4-3 5-3.500 9ZM15 21h6v2l-1.500 2.500h-3L15 23Z" fill="currentColor" stroke="none" />
        </svg>
      </StripButton>
      <StripButton $h={54} aria-label="Notifications"><FaBell size={20} /></StripButton>
      <StripHead $h={30}>TRADE</StripHead>
      <StripButton $h={53} aria-label="Trade">
        <svg width="28" height="20" viewBox="0 0 28 20" fill="none" stroke="currentColor" strokeWidth="3">
          <path d="M6.500 1v16M1.500 12l5 5.500 5-5.500M21.500 19V3M16.500 8l5-5.500 5 5.500" /><path d="M11 1h6l-6 6ZM17 19h-5l5-5Z" fill="currentColor" stroke="none" />
        </svg>
      </StripButton>
    </ToolStrip>
  );
}

export default function App() {
  return (
    <Page>
      <GlobalStyle />
      <Workspace>
        <DrawingToolbar />
        <Centre>
          <TopToolbar />
          <OrderTicket />
          <ChartArea />
          <FooterTools />
          <PanelHandle aria-label="Hide panel">
            <svg width="3" height="6" viewBox="0 0 3 6" fill="currentColor"><path d="M0 0l3 3-3 3Z" /></svg>
          </PanelHandle>
        </Centre>
        <InfoPanel />
        <RightStrip />
      </Workspace>
      <StatusStrip><StatusMark /></StatusStrip>
    </Page>
  );
}
